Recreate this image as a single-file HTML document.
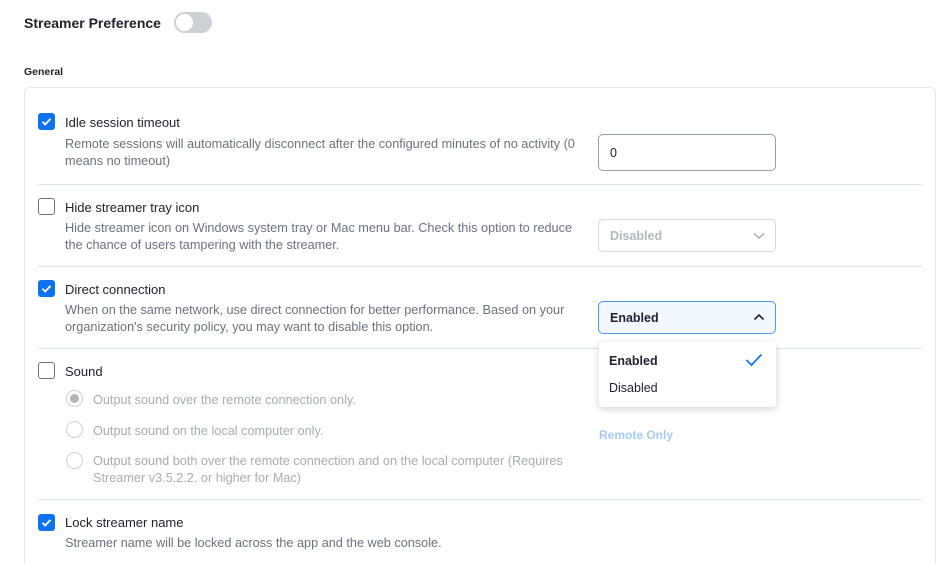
<!DOCTYPE html>
<html><head><meta charset="utf-8"><style>
*{box-sizing:border-box;margin:0;padding:0}
html{width:936px;height:564px;overflow:hidden}
body{width:936px;height:564px;background:#fff;font-family:"Liberation Sans",sans-serif;position:relative;overflow:hidden;color:#222230}
.a{position:absolute;white-space:nowrap}
.cb{position:absolute;left:38px;width:17px;height:17px;border-radius:3px}
.on{background:#0e72ed}
.off{border:1.5px solid #6e7080;background:#fff}
.t{font-size:13px;color:#222230;left:65px}
.d{font-size:12.7px;color:#6e7080;left:65px;line-height:17px}
.sep{position:absolute;left:38px;width:884px;height:1px;background:#dfe3e8}
.r{position:absolute;left:66px;width:17px;height:17px;border-radius:50%;border:1.5px solid #d0d0d5;background:#fff}
.rt{font-size:12.7px;color:#a9abb3;left:93px;line-height:17px}
</style></head><body>
<div class="a" style="left:24px;top:15px;font-size:14px;font-weight:bold">Streamer Preference</div>
<div class="a" style="left:174px;top:12px;width:38px;height:21px;border-radius:11px;background:#cfd0d6"><div style="position:absolute;left:2px;top:2px;width:17px;height:17px;border-radius:50%;background:#fff"></div></div>
<div class="a" style="left:24px;top:66px;font-size:10.5px;font-weight:bold">General</div>
<div class="a" style="left:24px;top:87px;width:912px;height:490px;border:1px solid #e4e6eb;border-radius:6px"></div>

<svg width="0" height="0" style="position:absolute"><defs><symbol id="ck" viewBox="0 0 17 17"><path d="M4.5 8.8l2.7 2.7 5.3-5.6" fill="none" stroke="#fff" stroke-width="1.8"/></symbol></defs></svg>

<div class="cb on" style="top:113px"><svg width="17" height="17"><use href="#ck"/></svg></div>
<div class="a t" style="top:115px">Idle session timeout</div>
<div class="a d" style="top:136px">Remote sessions will automatically disconnect after the configured minutes of no activity (0<br>means no timeout)</div>
<div class="a" style="left:598px;top:134px;width:178px;height:37px;border:1px solid #9a9ca8;border-radius:5px;font-size:12.5px;padding:11px 0 0 11px">0</div>
<div class="sep" style="top:184px"></div>

<div class="cb off" style="top:198px"></div>
<div class="a t" style="top:200px">Hide streamer tray icon</div>
<div class="a d" style="top:220px">Hide streamer icon on Windows system tray or Mac menu bar. Check this option to reduce<br>the chance of users tampering with the streamer.</div>
<div class="a" style="left:598px;top:219px;width:178px;height:33px;border:1px solid #d6d8dd;border-radius:5px;font-size:12.5px;font-weight:bold;color:#b5b7be;padding:9px 0 0 11px">Disabled<svg style="position:absolute;right:10px;top:12px" width="12" height="8"><path d="M1 1.5l5 4.5 5-4.5" fill="none" stroke="#a9abb3" stroke-width="1.4"/></svg></div>
<div class="sep" style="top:266px"></div>

<div class="cb on" style="top:280px"><svg width="17" height="17"><use href="#ck"/></svg></div>
<div class="a t" style="top:282px">Direct connection</div>
<div class="a d" style="top:302px">When on the same network, use direct connection for better performance. Based on your<br>organization's security policy, you may want to disable this option.</div>
<div class="a" style="left:598px;top:301px;width:178px;height:33px;border:1px solid #4a9af5;background:#f3f8ff;border-radius:5px;font-size:12.5px;font-weight:bold;color:#222230;padding:9px 0 0 11px">Enabled<svg style="position:absolute;right:10px;top:11px" width="12" height="8"><path d="M1.5 6.5l4.5-4.5 4.5 4.5" fill="none" stroke="#222230" stroke-width="1.6"/></svg></div>
<div class="sep" style="top:348px"></div>

<div class="cb off" style="top:362px"></div>
<div class="a t" style="top:364px">Sound</div>
<div class="r" style="top:390px;background:#fff"><div style="position:absolute;left:2.5px;top:2.5px;width:9px;height:9px;border-radius:50%;background:#b5b5b9"></div></div>
<div class="a rt" style="top:392px">Output sound over the remote connection only.</div>
<div class="r" style="top:421px"></div>
<div class="a rt" style="top:423px">Output sound on the local computer only.</div>
<div class="r" style="top:452px"></div>
<div class="a rt" style="top:453px">Output sound both over the remote connection and on the local computer (Requires<br>Streamer v3.5.2.2. or higher for Mac)</div>
<div class="a" style="left:599px;top:428px;font-size:12px;font-weight:bold;color:#a4cbf7">Remote Only</div>

<div class="a" style="left:599px;top:342px;width:177px;height:65px;background:#fff;border-radius:4px;box-shadow:0 2px 8px rgba(0,0,0,.18)">
<div class="a" style="left:10px;top:12px;font-size:12.5px;font-weight:bold;color:#222230">Enabled</div>
<svg style="position:absolute;left:146px;top:11px" width="18" height="14"><path d="M1.5 7l5 5 10-10.5" fill="none" stroke="#0e72ed" stroke-width="1.7"/></svg>
<div class="a" style="left:10px;top:39px;font-size:12.5px;color:#222230">Disabled</div>
</div>
<div class="sep" style="top:499px"></div>

<div class="cb on" style="top:514px"><svg width="17" height="17"><use href="#ck"/></svg></div>
<div class="a t" style="top:515px">Lock streamer name</div>
<div class="a d" style="top:535px">Streamer name will be locked across the app and the web console.</div>
</body></html>
